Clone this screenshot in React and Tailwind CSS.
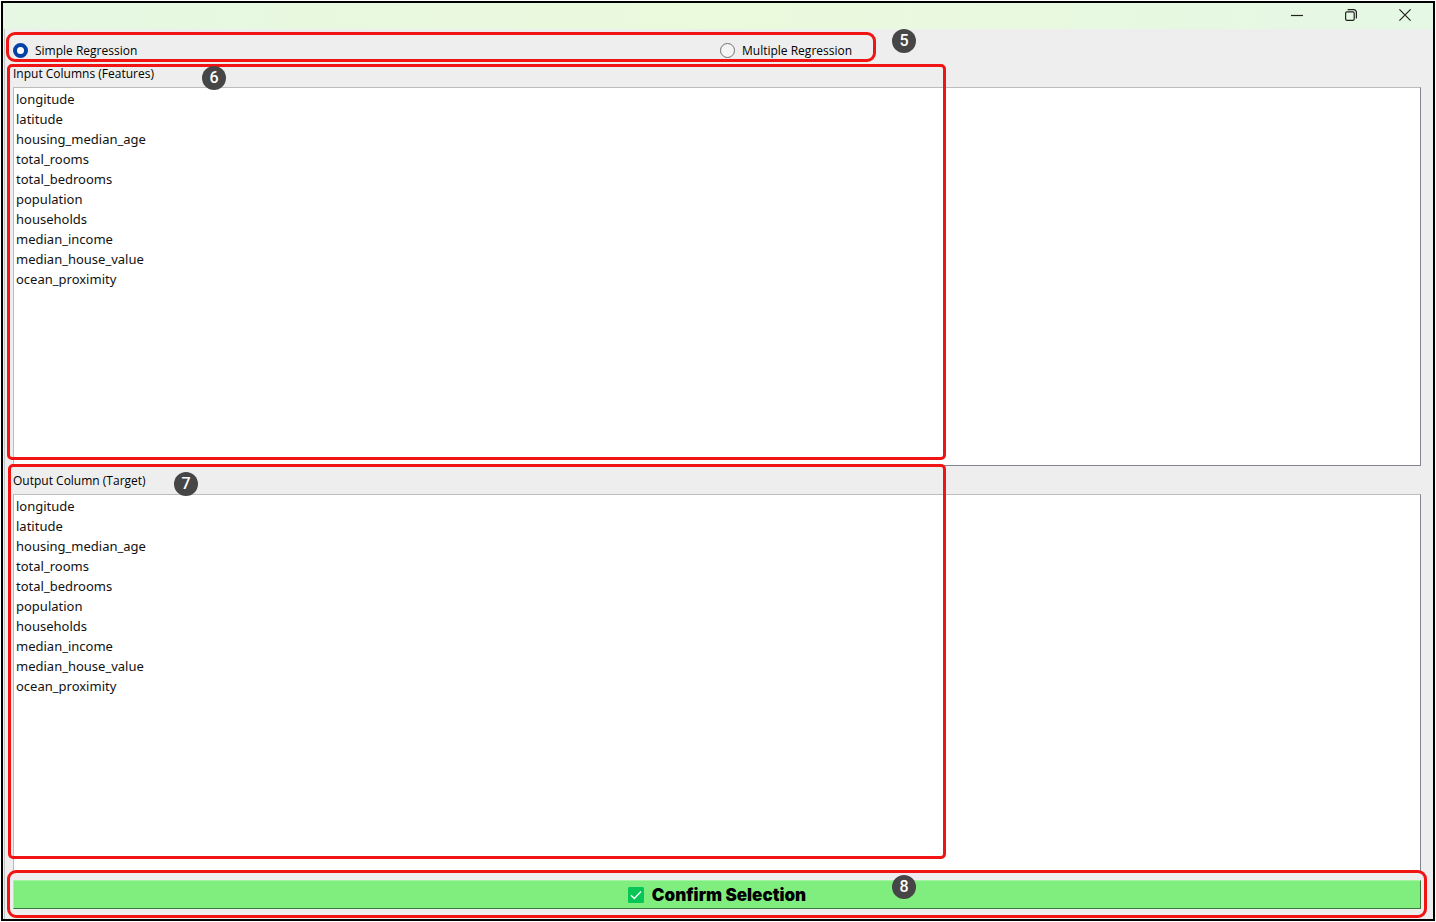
import { useState } from "react";

const COLUMNS = [
  "longitude",
  "latitude",
  "housing_median_age",
  "total_rooms",
  "total_bedrooms",
  "population",
  "households",
  "median_income",
  "median_house_value",
  "ocean_proximity",
];

function Outline({ className }) {
  return (
    <div
      aria-hidden="true"
      className={`pointer-events-none absolute z-10 border-3 border-[#f01414] ${className}`}
    />
  );
}

function Marker({ className, children }) {
  return (
    <span
      className={`pointer-events-none absolute z-20 flex size-6 items-center justify-center rounded-full bg-[#464646] font-['Roboto',sans-serif] text-base font-medium text-white ${className}`}
    >
      {children}
    </span>
  );
}

function TitleBar() {
  const control = "flex h-full w-[54px] items-center justify-center";
  return (
    <header className="flex h-[26px] items-center justify-end bg-linear-to-r from-[#e6f8e3] via-[#ebf9dc] to-[#e5f8e5] pr-px pb-[2px] text-[#222]">
      <button type="button" aria-label="Minimize" className={control}>
        <svg width="12" height="12" viewBox="0 0 12 12" fill="none" stroke="currentColor" strokeWidth="1.2">
          <path d="M0 6.5h12" />
        </svg>
      </button>
      <button type="button" aria-label="Restore" className={control}>
        <svg width="12" height="12" viewBox="0 0 12 12" fill="none" stroke="currentColor" strokeWidth="1.2">
          <rect x="0.6" y="2.8" width="8.6" height="8.6" rx="1.4" />
          <path d="M2.6 0.7h6.2a2.6 2.6 0 0 1 2.6 2.6v6.2" />
        </svg>
      </button>
      <button type="button" aria-label="Close" className={control}>
        <svg width="12" height="12" viewBox="0 0 12 12" fill="none" stroke="currentColor" strokeWidth="1.2">
          <path d="M0.4 0.4l11.2 11.2M11.6 0.4L0.4 11.6" />
        </svg>
      </button>
    </header>
  );
}

function ModeRadio({ value, mode, onChange, children }) {
  return (
    <label className="flex items-center gap-[7px]">
      <input
        type="radio"
        name="mode"
        value={value}
        checked={mode === value}
        onChange={() => onChange(value)}
        className="size-[15px] appearance-none rounded-full border border-[#707070] bg-[#f4f4f4] checked:border-4 checked:border-[#0641a8] checked:bg-white"
      />
      {children}
    </label>
  );
}

function ColumnList({ id, label, labelClass, multiple, children }) {
  return (
    <section className="relative flex flex-1 flex-col">
      <label htmlFor={id} className={labelClass}>
        {label}
      </label>
      <select
        id={id}
        size={10}
        multiple={multiple}
        className="w-full flex-1 appearance-none rounded-none border border-t-[#bcbcbc] border-r-[#858592] border-b-[#858592] border-l-[#bcbcbc] bg-white px-0 py-[2px] font-['Noto_Sans',sans-serif] text-[13px] text-[#111] outline-none"
      >
        {COLUMNS.map((name) => (
          <option key={name} value={name} className="h-5 px-[2px] py-0 leading-5">
            {name}
          </option>
        ))}
      </select>
      {children}
    </section>
  );
}

export default function App() {
  const [mode, setMode] = useState("simple");
  return (
    <div className="flex min-h-screen flex-col bg-white p-px font-['Open_Sans','Noto_Sans',sans-serif] text-black">
      <div className="flex flex-1 flex-col border-2 border-black bg-[#eeeeee]">
        <TitleBar />
        <main className="ml-px flex flex-1 flex-col border-l border-[#c4c4c4] pr-3 pb-[10px] pl-2 text-xs">
          <div className="relative grid h-9 grid-cols-2 items-center gap-x-[6px] pt-[7px]">
            <ModeRadio value="simple" mode={mode} onChange={setMode}>
              Simple Regression
            </ModeRadio>
            <ModeRadio value="multiple" mode={mode} onChange={setMode}>
              Multiple Regression
            </ModeRadio>
            <Outline className="top-[3px] -left-[7px] h-[30px] w-[870px] rounded-[9px]" />
            <Marker className="top-0 left-[879px]">5</Marker>
          </div>

          <ColumnList
            id="features"
            label="Input Columns (Features)"
            labelClass="h-[22px] leading-[18px]"
            multiple
          >
            <Outline className="-top-px bottom-[6px] -left-[6px] w-[939px] rounded-[5px]" />
            <Marker className="top-[1px] left-[189px]">6</Marker>
          </ColumnList>

          <ColumnList
            id="target"
            label="Output Column (Target)"
            labelClass="h-7 leading-[30px]"
          >
            <Outline className="-top-[2px] bottom-[13px] -left-[5px] w-[938px] rounded-[5px]" />
            <Marker className="top-[6px] left-[161px]">7</Marker>
          </ColumnList>

          <div className="relative mt-2 flex">
            <button
              type="button"
              className="flex h-[29px] flex-1 items-center justify-center gap-2 border border-t-[#a5f3a5] border-r-[#3d773d] border-b-[#3d773d] border-l-[#a5f3a5] bg-[#7fee7f] pt-px font-['Inter',sans-serif] text-[17px] font-black"
            >
              <svg width="16" height="16" viewBox="0 0 16 16" aria-hidden="true">
                <rect width="16" height="16" rx="1.5" fill="#06c755" />
                <path d="M3 8.2l3.3 3.2L13 4.6" fill="none" stroke="#fff" strokeWidth="1.4" />
              </svg>
              Confirm Selection
            </button>
            <Outline className="-top-[10px] -right-[6px] -bottom-[9px] -left-[6px] rounded-[9px]" />
            <Marker className="-top-[5px] left-[879px]">8</Marker>
          </div>
        </main>
      </div>
    </div>
  );
}
